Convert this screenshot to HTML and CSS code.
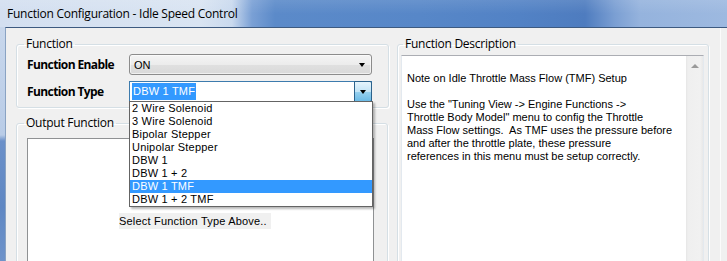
FILE: index.html
```html
<!DOCTYPE html>
<html>
<head>
<meta charset="utf-8">
<link rel="stylesheet" href="styles.css">
</head>
<body>
<div class="window">
  <div class="titlebar"><span class="title">Function Configuration - Idle Speed Control</span></div>
  <div class="body">
    <div class="frame"></div>
    <div class="client">
      <div class="col-left">
        <fieldset class="group g-function">
          <legend>Function</legend>
          <div class="inner">
            <div class="row">
              <span class="lbl">Function Enable</span>
              <div class="combo combo-btn"><span class="val">ON</span><span class="arrow"></span></div>
            </div>
            <div class="row">
              <span class="lbl">Function Type</span>
              <div class="combo combo-edit">
                <span class="sel">DBW 1 TMF</span>
                <span class="dropbtn"><span class="arrow"></span></span>
                <ul class="droplist">
                  <li>2 Wire Solenoid</li>
                  <li>3 Wire Solenoid</li>
                  <li>Bipolar Stepper</li>
                  <li>Unipolar Stepper</li>
                  <li>DBW 1</li>
                  <li>DBW 1 + 2</li>
                  <li class="active">DBW 1 TMF</li>
                  <li>DBW 1 + 2 TMF</li>
                </ul>
              </div>
            </div>
          </div>
        </fieldset>
        <fieldset class="group g-output">
          <legend>Output Function</legend>
          <div class="inner">
            <div class="panel"><span class="hint">Select Function Type Above..</span></div>
          </div>
        </fieldset>
      </div>
      <fieldset class="group g-desc">
        <legend>Function Description</legend>
        <div class="inner">
          <div class="textbox">
            <div class="text">
              <p>&nbsp;</p>
              <p>Note on Idle Throttle Mass Flow (TMF) Setup</p>
              <p>&nbsp;</p>
              <p>Use the "Tuning View -&gt; Engine Functions -&gt;</p>
              <p>Throttle Body Model" menu to config the Throttle</p>
              <p>Mass Flow settings.&nbsp; As TMF uses the pressure before</p>
              <p>and after the throttle plate, these pressure</p>
              <p>references in this menu must be setup correctly.</p>
            </div>
            <div class="scrollbar"><span class="up"></span></div>
          </div>
        </div>
      </fieldset>
      <div class="edge"></div>
    </div>
  </div>
</div>
</body>
</html>
```
FILE: styles.css
```css
html, body {
  margin: 0;
  padding: 0;
}
body {
  width: 727px;
  height: 261px;
  overflow: hidden;
  background: #6a8fca;
  font-family: "Liberation Sans", Arial, sans-serif;
  font-size: 11px;
  color: #000;
}
.window {
  display: flex;
  flex-direction: column;
  height: 261px;
}
.titlebar {
  flex: none;
  height: 27px;
  box-sizing: border-box;
  padding-left: 7px;
  display: flex;
  align-items: center;
  background:
    linear-gradient(180deg, rgba(255,255,255,0.10) 0, rgba(255,255,255,0) 14px),
    linear-gradient(90deg, #d3dff0 0, #d9e4f2 200px, #c9d9ee 232px, #7aa0d5 252px, #5b8ac9 275px, #5787c8 420px, #5282c5 520px, #4e7cbf 585px, #7b9fd3 615px, #95b3dd 640px, #9db9e0 727px);
}
.title {
  font-family: "Open Sans", "Noto Sans", sans-serif;
  font-size: 12px;
  letter-spacing: -0.25px;
  color: #000;
  margin-top: -1px;
}
.body {
  flex: 1;
  display: flex;
  min-height: 0;
}
.frame {
  flex: none;
  width: 5px;
  background: linear-gradient(180deg, #c8d7ec 0, #b9cce7 108px, #6b90c9 114px, #5f87c3 180px, #6e93ca 234px);
}
.client {
  flex: 1;
  display: flex;
  align-items: flex-start;
  gap: 8px;
  padding: 9px 0 0 10px;
  background: #f0f0f0;
  border-top: 1px solid #3d5a80;
  border-left: 1px solid #8aa3c3;
  overflow: hidden;
}
.col-left {
  display: flex;
  flex-direction: column;
  gap: 8px;
  width: 373px;
  flex: none;
}
.group {
  margin: 0;
  padding: 0;
  min-width: 0;
  border: 1px solid #d5dfe5;
  border-radius: 3px;
  box-shadow: inset 1px 1px 0 #fff, 1px 1px 0 #fff;
}
.group legend {
  font-family: "Open Sans", "Noto Sans", sans-serif;
  font-size: 12px;
  letter-spacing: -0.25px;
  line-height: 14px;
  padding: 0 2px;
  margin-left: 7px;
}
.g-function {
  width: 373px;
  box-sizing: border-box;
}
.g-function .inner {
  display: flex;
  flex-direction: column;
  gap: 6px;
  padding: 3px 16px 5px 10px;
}
.row {
  display: flex;
  align-items: center;
}
.lbl {
  width: 102px;
  flex: none;
  font-family: "Open Sans", "Noto Sans", sans-serif;
  font-weight: bold;
  font-size: 12px;
  letter-spacing: -0.6px;
}
.combo {
  position: relative;
  width: 243px;
  height: 21px;
  box-sizing: border-box;
  display: flex;
  align-items: center;
}
.combo-btn {
  border: 1px solid #8c8c8c;
  border-radius: 3px;
  background: linear-gradient(180deg, #f4f4f4 0%, #ececec 50%, #e0e0e0 51%, #d9d9d9 100%);
  box-shadow: inset 0 0 0 1px rgba(255,255,255,0.6);
  padding-left: 4px;
}
.combo-btn .val {
  flex: 1;
}
.arrow {
  width: 0;
  height: 0;
  border-left: 3.5px solid transparent;
  border-right: 3.5px solid transparent;
  border-top: 4px solid #000;
}
.combo-btn .arrow {
  margin-right: 6px;
  margin-top: 1px;
}
.combo-edit {
  border: 1px solid #3d7bad;
  background: #fff;
  padding-left: 2px;
}
.combo-edit .sel {
  background: #3399ff;
  color: #fff;
  line-height: 17px;
  padding: 0 1px;
  margin-right: auto;
  letter-spacing: 0.2px;
}
.dropbtn {
  align-self: stretch;
  width: 16px;
  margin: -1px -1px -1px 0;
  border: 1px solid #2c628b;
  border-radius: 0 2px 2px 0;
  background: linear-gradient(180deg, #e5f4fc 0%, #c4e5f6 50%, #98d1ef 51%, #6cbbe6 100%);
  display: flex;
  align-items: center;
  justify-content: center;
}
.dropbtn .arrow {
  margin-top: 1px;
}
.droplist {
  position: absolute;
  top: 100%;
  left: -1px;
  width: 244px;
  box-sizing: border-box;
  margin: 0;
  padding: 0;
  list-style: none;
  background: #fff;
  border: 1px solid #646464;
  box-shadow: 2px 2px 2px rgba(0,0,0,0.28);
  z-index: 5;
}
.droplist li {
  height: 13px;
  line-height: 13px;
  padding-left: 2px;
  white-space: nowrap;
  letter-spacing: 0.2px;
}
.droplist li.active {
  background: #3399ff;
  color: #fff;
}
.g-output {
  width: 372px;
  box-sizing: border-box;
  height: 200px;
}
.g-output .inner {
  padding: 8px 13px 0 10px;
}
.panel {
  height: 160px;
  background: #fff;
  border: 1px solid #8f9193;
  padding: 74px 0 0 91px;
  box-sizing: border-box;
}
.hint {
  display: inline-block;
  background: #f0f0f0;
  line-height: 16px;
  height: 16px;
  padding-right: 4px;
  white-space: nowrap;
  letter-spacing: 0.2px;
}
.g-desc {
  width: 312px;
  flex: none;
  box-sizing: border-box;
  height: 240px;
}
.g-desc legend {
  margin-left: 5px;
}
.g-desc .inner {
  padding: 4px 4px 0 3px;
}
.textbox {
  display: flex;
  height: 220px;
  border: 1px solid #e3e9ef;
  border-top-color: #abadb3;
  background: #fff;
}
.text {
  flex: 1;
  padding: 3px 0 0 5px;
  line-height: 13px;
  white-space: nowrap;
}
.text p {
  margin: 0;
  height: 13px;
}
.scrollbar {
  width: 17px;
  flex: none;
  background: linear-gradient(90deg, #e6e6e6 0, #efefef 2px, #f1f1f1 14px, #e8e8e8 17px);
  display: flex;
  justify-content: center;
}
.scrollbar .up {
  margin-top: 8px;
  width: 0;
  height: 0;
  border-left: 4px solid transparent;
  border-right: 4px solid transparent;
  border-bottom: 4px solid #9a9a9a;
}
.edge {
  width: 1px;
  align-self: stretch;
  margin: -9px 0 0 3px;
  background: #fbfbfb;
  flex: none;
}
```
